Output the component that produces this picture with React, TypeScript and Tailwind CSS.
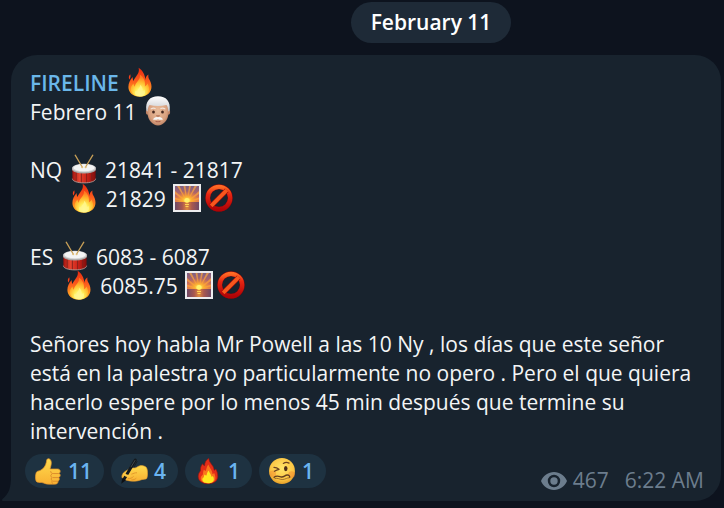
import type { ReactNode } from "react";

type EmojiProps = { label: string; size?: "text" | "reaction"; children: ReactNode };

function Emoji({ label, size = "text", children }: EmojiProps) {
  return (
    <svg
      role="img"
      aria-label={label}
      viewBox="0 0 32 32"
      className={
        size === "text"
          ? "-mt-[7px] -mb-px inline-block h-8 w-8 align-middle"
          : "block h-7 w-7 shrink-0"
      }
    >
      {children}
    </svg>
  );
}

/* Gradients shared by every emoji drawing on the page. */
function EmojiGradients() {
  return (
    <svg aria-hidden="true" className="absolute h-0 w-0">
      <defs>
        <linearGradient id="flameOuter" x1="0" y1="0" x2="0" y2="1">
          <stop offset="0" stopColor="#e8280f" />
          <stop offset="0.45" stopColor="#fb5a1c" />
          <stop offset="0.8" stopColor="#ff9a20" />
          <stop offset="1" stopColor="#ffb52c" />
        </linearGradient>
        <radialGradient id="flameInner" cx="0.5" cy="0.85" r="0.75">
          <stop offset="0" stopColor="#fffdc4" />
          <stop offset="0.35" stopColor="#ffee58" />
          <stop offset="0.7" stopColor="#ffb52c" />
          <stop offset="1" stopColor="#ff7a20" />
        </radialGradient>
        <radialGradient id="skin" cx="0.5" cy="0.45" r="0.6">
          <stop offset="0" stopColor="#e9bd9c" />
          <stop offset="0.7" stopColor="#d9a17f" />
          <stop offset="1" stopColor="#b0755a" />
        </radialGradient>
        <linearGradient id="whiteHair" x1="0" y1="0" x2="0" y2="1">
          <stop offset="0" stopColor="#ffffff" />
          <stop offset="1" stopColor="#c6c8cc" />
        </linearGradient>
        <linearGradient id="drumBody" x1="0" y1="0" x2="1" y2="0">
          <stop offset="0" stopColor="#a3140f" />
          <stop offset="0.3" stopColor="#e5432f" />
          <stop offset="0.65" stopColor="#c92118" />
          <stop offset="1" stopColor="#7e0d0b" />
        </linearGradient>
        <linearGradient id="sunsetSky" x1="0" y1="0" x2="0" y2="1">
          <stop offset="0" stopColor="#7e6084" />
          <stop offset="0.45" stopColor="#c8695c" />
          <stop offset="1" stopColor="#ff9d38" />
        </linearGradient>
        <radialGradient id="sunsetGlow" cx="0.5" cy="0.85" r="0.55">
          <stop offset="0" stopColor="#fff36a" />
          <stop offset="0.35" stopColor="#ffb52f" stopOpacity="0.9" />
          <stop offset="1" stopColor="#ff8c30" stopOpacity="0" />
        </radialGradient>
        <linearGradient id="sunsetSea" x1="0" y1="0" x2="1" y2="0">
          <stop offset="0" stopColor="#6f4966" />
          <stop offset="0.3" stopColor="#a9584f" />
          <stop offset="0.5" stopColor="#e08a3e" />
          <stop offset="0.7" stopColor="#a9584f" />
          <stop offset="1" stopColor="#6f4966" />
        </linearGradient>
        <linearGradient id="banRing" x1="0" y1="0" x2="0" y2="1">
          <stop offset="0" stopColor="#ff6a24" />
          <stop offset="0.35" stopColor="#e52512" />
          <stop offset="1" stopColor="#b00407" />
        </linearGradient>
        <radialGradient id="face" cx="0.5" cy="0.4" r="0.62">
          <stop offset="0" stopColor="#ffe56a" />
          <stop offset="0.7" stopColor="#fcc644" />
          <stop offset="1" stopColor="#e39a26" />
        </radialGradient>
        <linearGradient id="hand" x1="0" y1="0" x2="0" y2="1">
          <stop offset="0" stopColor="#ffdb4d" />
          <stop offset="1" stopColor="#f8b133" />
        </linearGradient>
      </defs>
    </svg>
  );
}

function Fire() {
  return (
    <Emoji label="fire">
      <path
        fill="url(#flameOuter)"
        d="M14.600 1.800c1.100 4.400-1.100 6.900-3.200 9.700-.9 1.200-1.600 2.300-1.900 3.400-.7-1.400-.9-2.500-.7-4C6.200 13.500 4.400 16.800 4.400 21c0 5.500 4.600 9.700 11.400 9.700s11.700-4.100 11.700-9.900c0-3.200-1.200-5.400-2.300-7.500-.8-1.600-1.100-3-.7-4.900-2.100.9-3.100 3-2.900 5.700-.9-4.800-2.200-9.300-7-12.300z"
      />
      <path fill="#f9401a" d="M6.200 8.200c-1.400 1.700-1.800 3.300-.9 5.200 1.200-1.500 1.600-3.300.9-5.200z" />
      <path
        fill="url(#flameInner)"
        d="M15.900 8.800c.6 3.800-2 6.100-3.900 8.800-.8 1.100-1.100 2.100-1.100 3.100-.9-.8-1.400-1.800-1.500-3.100-1.700 1.900-2.600 3.500-2.600 5.400 0 4.400 3.900 7.500 9.100 7.500 5.300 0 9.200-3 9.200-7.600 0-2.200-.9-3.700-1.600-5.300-.6 1.400-1.300 2.200-2.600 2.800.7-5-1.100-9.200-5-11.600z"
      />
      <path
        fill="#fff68d"
        opacity="0.85"
        d="M16.200 18.800c.2 2.400-1.400 3.400-2.300 4.800-.5.8-.6 1.400-.4 2.100-.8-.3-1.200-.8-1.400-1.500-.8.8-1.100 1.700-1.100 2.500 0 2.200 2.100 3.500 5 3.500s5-1.500 5-3.800c0-1.100-.3-1.900-.8-2.700-.4.8-.8 1.200-1.500 1.400.2-2.600-.7-4.900-2.500-6.300z"
      />
    </Emoji>
  );
}

function OldMan() {
  return (
    <Emoji label="old man">
      <ellipse cx="5.400" cy="17" rx="1.500" ry="2.800" fill="#c08465" />
      <ellipse cx="26.600" cy="17" rx="1.500" ry="2.800" fill="#c08465" />
      <path
        fill="url(#skin)"
        d="M5.500 12C5.500 6 9.500 3.500 16 3.500S26.500 6 26.500 12v5.500c0 7.500-5.200 13-10.500 13s-10.500-5.500-10.500-13z"
      />
      <path
        fill="url(#whiteHair)"
        d="M4.300 15.200C3.300 6.500 7.800 1.300 16 1.300s12.700 5.200 11.700 13.900l-1.400 1.500c0-2.900-.6-5-1.900-6.700-5.300 1.300-11.500 1.300-16.800 0-1.300 1.700-1.900 3.800-1.900 6.700z"
      />
      <path d="M9.200 13.800q2-1.200 3.900-.3M18.900 13.500q1.900-.9 3.900.3" fill="none" stroke="#f0e3da" strokeWidth="1.300" strokeLinecap="round" />
      <ellipse cx="11.500" cy="17" rx="1.400" ry="1.500" fill="#472920" />
      <ellipse cx="20.500" cy="17" rx="1.400" ry="1.500" fill="#472920" />
      <path d="M14.400 20.500q1.600 1.200 3.200 0" fill="none" stroke="#b06e52" strokeWidth="1.200" />
      <path fill="#f8f6f5" d="M16 22.200c-1.900-.8-4.100.1-5 2.300 1.800.5 3.500.4 5-.2 1.500.6 3.200.7 5 .2-.9-2.200-3.100-3.100-5-2.300z" />
      <path d="M14 26.400q2 .8 4 0" fill="none" stroke="#a65d4c" strokeWidth="1.100" strokeLinecap="round" />
    </Emoji>
  );
}

function Drum() {
  return (
    <Emoji label="drum">
      <path fill="url(#drumBody)" d="M4.400 15v10.500c0 2.900 5 4.500 11.600 4.500s11.600-1.600 11.600-4.500V15z" />
      <path d="M8.200 18.500v9.800M13.400 19.500v10M18.600 19.500v10M23.800 18.500v9.800" stroke="#74201c" strokeWidth="0.800" />
      <path d="M4.400 25.700c0 2.500 5 4.200 11.600 4.200s11.600-1.700 11.600-4.200" fill="none" stroke="#a99894" strokeWidth="0.900" />
      <ellipse cx="16" cy="16.200" rx="11.900" ry="4.400" fill="#a9a6a5" />
      <ellipse cx="16" cy="15" rx="11.900" ry="4.300" fill="#d3d3d4" />
      <ellipse cx="16" cy="14.700" rx="10.600" ry="3.500" fill="#f4f5f5" />
      <path d="M7.200 2.200 14.200 14M24.800 2.200 17.600 14" stroke="#c79f57" strokeWidth="1.300" strokeLinecap="round" />
      <circle cx="14.200" cy="14.200" r="1" fill="#e2c17d" />
      <circle cx="17.600" cy="14.200" r="1" fill="#e2c17d" />
    </Emoji>
  );
}

function Sunset() {
  return (
    <Emoji label="sunrise">
      <rect x="2" y="2" width="28" height="28" fill="#ececee" />
      <rect x="4" y="4" width="24" height="24" fill="url(#sunsetSky)" />
      <path
        fill="#ffa63a"
        opacity="0.7"
        d="M16 20 4 9v3zM16 20 6 4h2.500zM16 20 12.500 4h2zM16 20 18 4h2zM16 20 23.500 4H26zM16 20 28 9v3zM16 20 4 15.500v2zM16 20l12-4.500v2z"
      />
      <rect x="4" y="4" width="24" height="16.500" fill="url(#sunsetGlow)" />
      <circle cx="16" cy="18.500" r="2.600" fill="#fff36b" />
      <rect x="4" y="20" width="24" height="8" fill="url(#sunsetSea)" />
      <path d="M14.500 20.500h3M14 22.500h4M14.500 24.500h3" stroke="#ffd257" strokeWidth="1" />
    </Emoji>
  );
}

function Prohibited() {
  return (
    <Emoji label="prohibited">
      <circle cx="16" cy="16" r="11.200" fill="none" stroke="#8e0608" strokeWidth="5" />
      <circle cx="16" cy="16" r="11.200" fill="none" stroke="url(#banRing)" strokeWidth="4.200" />
      <path d="M8.200 23.800l15.600-15.600" stroke="#9c0a08" strokeWidth="5" />
      <path d="M8.200 23.800l15.600-15.600" stroke="#f7571d" strokeWidth="3.800" />
    </Emoji>
  );
}

function ThumbsUp() {
  return (
    <Emoji label="thumbs up" size="reaction">
      <path
        fill="url(#hand)"
        stroke="#e5952d"
        strokeWidth="0.800"
        d="M2.500 18c.7-2 3-2 4.700-2.700 3.700-1.600 6.200-5.300 6.900-9.200.3-1.800.3-4.200 2.300-4.200 2.600 0 3.700 3 3.300 6-.2 2-.9 4-1.400 5.800h8.600c2 0 3.200 1.400 3 3-.1 1-.6 1.700-1.200 2.100 1 .6 1.400 1.600 1.200 2.700-.2 1-.8 1.700-1.600 2 .6.600.8 1.400.6 2.300-.2.900-.8 1.500-1.600 1.800.4 2.400-1.200 3.400-3.600 3.400h-7.200c-3.700 0-5.300-1.600-8-1.900-1.700-.2-5.400.6-6.100-1.600-1-3.100-.9-6.600.1-9.500z"
      />
      <path d="M28 18.900h-6.200c-1.800 0-2.700-1-2.700-2.300M28.200 23.500h-6.500M27.300 27.700h-5.200M19.900 19.800q-2 1.700.4 3.600-1.700 1.800.5 3.800-1.200 1.400.3 3" fill="none" stroke="#dd8d2b" strokeWidth="1.100" strokeLinecap="round" />
    </Emoji>
  );
}

function WritingHand() {
  return (
    <Emoji label="writing hand" size="reaction">
      <path
        fill="url(#hand)"
        stroke="#e39a2d"
        strokeWidth="0.700"
        d="M2.200 21.500c.6-3 3.300-5 6-6.500 2.500-1.500 4.600-2.800 7-2.500 1.600.2 2.600.2 4-.8 2.200-1.500 4.600-2.200 7-1.700 1.800.3 3.300 1 4.200 2.300 1.300 2.500 1.600 9 .2 12.200-1.200 1.200-3.900.9-5.900 1.400-2.500.7-4.500 1.700-8 1.700-4 0-8-.5-10.500-1.400-2.700-.8-4.500-2.200-4-4.700z"
      />
      <path d="M13.500 19.500c1.600-.5 3.500-1.700 5.500-1.500M9.500 24.700c2.400.2 4-.6 5.700-2.200M13.500 26.200c2 .1 3.400-.6 4.800-1.700" fill="none" stroke="#df9128" strokeWidth="1" strokeLinecap="round" />
      <path d="M4.600 25.500 17.500 3.500" stroke="#15191d" strokeWidth="3.400" strokeLinecap="round" />
      <path d="m2.700 24 4 2.500-5.300 4.200z" fill="#0e1115" />
      <path d="m12.500 11.500 4.800-7.800" stroke="#4b555c" strokeWidth="0.900" />
      <path d="m19.600 5-3.300 6" stroke="#1a1d22" strokeWidth="1.100" strokeLinecap="round" />
      <path d="M4.600 19.500c1.600 1.500 3.600 2.300 6 2.300" fill="none" stroke="#fcc945" strokeWidth="2.600" strokeLinecap="round" />
    </Emoji>
  );
}

function FireReaction() {
  return (
    <Emoji label="fire" size="reaction">
      <path
        fill="#e42d18"
        stroke="#8f150e"
        strokeWidth="0.700"
        d="M16.800 1.500c-3.200 2.200-4.700 5-4.700 8.500-1.100-.4-1.900-1.200-2.300-2.400C7.600 10.500 7.200 13 7.400 15.800 5.600 18 4.800 20 4.800 22.300 4.800 27.500 9.300 30.500 16 30.500s11.200-3.200 11.200-8.500c0-3-.8-5.500-2.200-8.200-.6.800-1.200 1.200-2 1.300.2-5.600-5.700-7.400-6.200-13.600z"
      />
      <path fill="#fb741c" d="M16.500 8.500c-2 2.500-2.300 4.800-3 7.500-.9-.3-1.700-.9-2.200-1.800-1 2.600-.9 4.300-1.300 6-1.700 1.300-2.300 2.800-2.300 4.300 0 3.500 3.500 5.500 8.300 5.500s8.500-2 8.500-6c0-2.200-.5-4-1.500-5.800-.5.700-1.200 1.200-2 1.300.3-4.400-3.200-6.500-4.500-11z" />
      <path fill="#ffe81f" d="M16.700 15.300c-1.700 2-2 3.700-2.400 5.900-1 0-1.700-.5-2.200-1.300-.7 1.300-.7 2.300-.9 3.200-1.200.8-1.700 1.700-1.700 2.700 0 2.800 3 4.200 6.500 4.200s6.700-1.500 6.700-4.700c0-1.500-.5-2.700-1.200-3.700-.4.600-.9.900-1.500 1-.1-3-2.300-4.200-3.300-7.300z" />
    </Emoji>
  );
}

function WoozyFace() {
  return (
    <Emoji label="woozy face" size="reaction">
      <circle cx="16" cy="16" r="14.800" fill="url(#face)" />
      <circle cx="5.500" cy="19" r="3.700" fill="#f2872f" opacity="0.45" />
      <circle cx="27" cy="20" r="3.700" fill="#f2872f" opacity="0.500" />
      <ellipse cx="20.300" cy="13.200" rx="2" ry="3" fill="#4d2b18" />
      <path d="M6.800 11.800q3.200 0 5.800 2.200M7.300 16.300q2.600-1.500 5.300-2.200M17.500 7.400q3.200-2.400 6.500-.4" fill="none" stroke="#6d4321" strokeWidth="1.400" strokeLinecap="round" />
      <path d="M7 23.200c2.800-2.600 5.300-1.200 7.700-.5 3.400 1 4.200-2 7.300-2.100 2-.1 2.800 1.100 2.800 2.600" fill="none" stroke="#65401e" strokeWidth="1.600" strokeLinecap="round" />
      <path d="M8 24.500c3.300-1 5.500 1.500 9 1.200 3.200-.3 4.600-2 7.200-2" fill="none" stroke="#8b5a25" strokeWidth="0.900" strokeLinecap="round" />
    </Emoji>
  );
}

function EyeIcon() {
  return (
    <svg aria-hidden="true" viewBox="0 0 26 18" className="mr-1.5 h-[18px] w-[26px]">
      <path
        fill="currentColor"
        fillRule="evenodd"
        d="M13 0C7.200 0 2.300 3.600 0 9c2.300 5.400 7.200 9 13 9s10.700-3.600 13-9C23.700 3.600 18.800 0 13 0zm0 15.200a6.200 6.200 0 1 1 0-12.400 6.200 6.200 0 0 1 0 12.400zm0-2.500a3.700 3.700 0 1 0 0-7.400 3.700 3.700 0 0 0 0 7.400z"
      />
    </svg>
  );
}

function Reaction({ count, children }: { count: number; children: ReactNode }) {
  return (
    <button
      type="button"
      className="flex h-[34px] items-center gap-1.5 rounded-full bg-[#1e3241] pr-3 pl-[9px] text-[21px] leading-[29px] font-semibold text-[#6ab4f0]"
    >
      {children}
      <span>{count}</span>
    </button>
  );
}

export default function App() {
  return (
    <main className="min-h-screen bg-[#0d131e] pt-0.5 pb-[7px] font-['Open_Sans','Noto_Sans',sans-serif] text-[#f3f5f6]">
      <EmojiGradients />
      <div className="flex justify-center pl-[138px]">
        <time dateTime="02-11" className="rounded-full bg-[#1e2a37] px-5 py-1.5 text-[21px] leading-[29px] font-semibold text-white">
          February 11
        </time>
      </div>

      <article className="relative mt-3 mr-[3px] ml-[11px] rounded-[26px] rounded-bl-none bg-[#18232e] pt-3.5 pb-1.5">
        <svg aria-hidden="true" viewBox="0 0 10 24" className="absolute bottom-0 -left-[9px] h-6 w-[10px]">
          <path fill="#18232e" d="M10 0H9c0 10-2 17-8.500 22-.8.800-.5 2 .8 2H10z" />
        </svg>

        <div className="pr-5 pl-[19px] text-[21px] leading-[29px] whitespace-pre-wrap">
          <h2 className="font-semibold text-[#6ab7ea]">
            FIRELINE <Fire />
          </h2>
          <p>
            Febrero 11 <OldMan />
          </p>
          <p className="mt-[29px]">
            NQ <Drum /> 21841 - 21817
            {"\n       "}
            <Fire /> 21829 <Sunset />
            <Prohibited />
          </p>
          <p className="mt-[29px]">
            ES <Drum /> 6083 - 6087
            {"\n      "}
            <Fire /> 6085.75 <Sunset />
            <Prohibited />
          </p>
          <p className="mt-[29px]">
            Señores hoy habla Mr Powell a las 10 Ny , los días que este señor está en la palestra yo
            particularmente no opero . Pero el que quiera hacerlo espere por lo menos 45 min después que
            termine su intervención .
          </p>
        </div>

        <footer className="mt-2 flex items-start justify-between pr-[17px] pl-3.5">
          <div className="flex gap-[7px]">
            <Reaction count={11}>
              <ThumbsUp />
            </Reaction>
            <Reaction count={4}>
              <WritingHand />
            </Reaction>
            <Reaction count={1}>
              <FireReaction />
            </Reaction>
            <Reaction count={1}>
              <WoozyFace />
            </Reaction>
          </div>
          <div className="mt-3 flex items-center text-[21px] leading-[29px] text-[#6c7d8d]">
            <EyeIcon />
            <span className="mr-4">467</span>
            <time dateTime="06:22">6:22 AM</time>
          </div>
        </footer>
      </article>
    </main>
  );
}
